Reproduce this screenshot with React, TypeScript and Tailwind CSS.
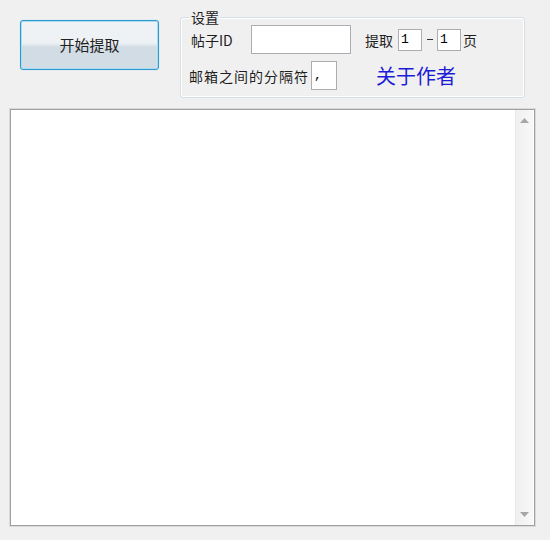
import React from "react";

const cjk = { fontFamily: '"Noto Sans CJK SC", "Noto Sans", sans-serif' };

function SmallInput({ w, h, value }: { w: string; h: string; value?: string }) {
  return (
    <div
      className={`${w} ${h} bg-white border border-[#abadb3] flex items-center pl-[2px] text-[13px] leading-none text-black`}
      style={{ fontFamily: '"Liberation Mono", monospace' }}
    >
      {value}
    </div>
  );
}

export default function App() {
  return (
    <div className="w-[550px] h-[540px] bg-[#f0f0f0] text-[#1e1e1e] overflow-hidden" style={cjk}>
      <div className="flex items-start h-[108px]">
        <button className="ml-[20px] mt-[20px] w-[139px] h-[50px] rounded-[3px] border border-[#3399cc] bg-gradient-to-b from-[#eef2f5] from-45% to-[#d2dce4] to-55% shadow-[inset_0_0_0_1px_#a8dcf4,0_0_1px_#6cc4ec] text-[15px] text-[#222] flex items-center justify-center">
          开始提取
        </button>
        <div className="relative ml-[21px] mt-[17px] w-[345px] h-[81px] rounded-[3px] border border-[#d5dfe5] shadow-[inset_0_0_0_1px_#fff]">
          <span className="absolute left-[9px] -top-[10px] px-[1px] bg-[#f0f0f0] text-[14px] leading-[18px] text-[#1e1e1e]">设置</span>
          <div className="flex items-center mt-[7px] h-[29px] pl-[10px]">
            <span className="w-[60px] text-[14px] leading-none">帖子ID</span>
            <SmallInput w="w-[100px]" h="h-[29px]" />
            <span className="ml-[14px] text-[14px] leading-none">提取</span>
            <div className="ml-[5px]">
              <SmallInput w="w-[24px]" h="h-[22px]" value="1" />
            </div>
            <span className="ml-[5px] mr-[4px] w-[6px] h-[1.5px] bg-[#333]" />
            <SmallInput w="w-[24px]" h="h-[22px]" value="1" />
            <span className="ml-[2px] text-[14px] leading-none">页</span>
          </div>
          <div className="flex items-center mt-[7px] h-[29px] pl-[8px]">
            <span className="text-[14px] leading-none tracking-[1px]">邮箱之间的分隔符</span>
            <div className="ml-[2px]">
              <SmallInput w="w-[26px]" h="h-[29px]" value="," />
            </div>
            <span className="ml-[39px] text-[20px] leading-none text-[#1c1cd6]">关于作者</span>
          </div>
        </div>
      </div>
      <div className="ml-[9px] w-[527px] h-[419px] border border-[#dadada]">
        <div className="w-full h-full border border-[#a0a0a0] bg-white flex">
          <div className="flex-1" />
          <div className="w-[18px] mr-[1px] h-full bg-gradient-to-r from-[#f0f0f0] to-[#f8f8f8] border-l border-[#e8e8e8] flex flex-col items-center justify-between py-[8px]">
            <svg width="9" height="5" viewBox="0 0 9 5"><polygon points="0,5 9,5 4.5,0" fill="#a6a6a6" /></svg>
            <svg width="9" height="5" viewBox="0 0 9 5"><polygon points="0,0 9,0 4.5,5" fill="#a6a6a6" /></svg>
          </div>
        </div>
      </div>
    </div>
  );
}
